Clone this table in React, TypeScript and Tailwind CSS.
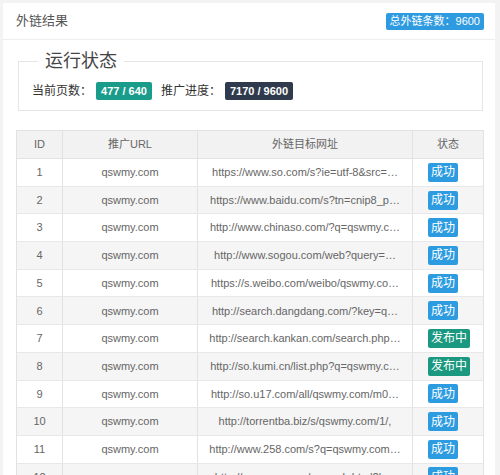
const rows: { url: string; status: 'ok' | 'pending' }[] = [
  { url: 'https://www.so.com/s?ie=utf-8&src=…', status: 'ok' },
  { url: 'https://www.baidu.com/s?tn=cnip8_p…', status: 'ok' },
  { url: 'http://www.chinaso.com/?q=qswmy.c…', status: 'ok' },
  { url: 'http://www.sogou.com/web?query=…', status: 'ok' },
  { url: 'https://s.weibo.com/weibo/qswmy.co…', status: 'ok' },
  { url: 'http://search.dangdang.com/?key=q…', status: 'ok' },
  { url: 'http://search.kankan.com/search.php…', status: 'pending' },
  { url: 'http://so.kumi.cn/list.php?q=qswmy.c…', status: 'pending' },
  { url: 'http://so.u17.com/all/qswmy.com/m0…', status: 'ok' },
  { url: 'http://torrentba.biz/s/qswmy.com/1/,', status: 'ok' },
  { url: 'http://www.258.com/s?q=qswmy.com…', status: 'ok' },
  { url: 'http://www.sooe.cn/vsearch.html?k…', status: 'ok' },
];

const font = { fontFamily: '"Liberation Sans", Arial, "Noto Sans CJK SC", sans-serif' };

function Badge({ children, color }: { children: React.ReactNode; color: string }) {
  return (
    <span className={`inline-flex items-center h-[19px] px-[3px] rounded-[2px] text-white text-[12px] ${color}`}>
      {children}
    </span>
  );
}

export default function App() {
  return (
    <div className="w-[500px] h-[475px] overflow-hidden bg-[#f3f3f4] pt-[3px] pl-[3px]" style={font}>
      <div className="w-[492px] h-[472px] bg-white">
        {/* header */}
        <div className="h-[37px] flex items-center justify-between pl-[13px] pr-[11px] border-b border-[#eeeeee]">
          <span className="text-[13px] text-[#555]">外链结果</span>
          <span className="inline-flex items-center h-[17px] px-[4px] rounded-[2px] bg-[#2e9ae0] text-white text-[11px]">
            总外链条数：9600
          </span>
        </div>

        <div className="pl-[13px] pr-[11px] pt-[10px]">
          {/* run status */}
          <fieldset className="ml-[2px] mr-[1px] border border-[#e5e5e5] pl-[13px] pb-[10px]">
            <legend className="ml-[6px] px-[7px] text-[18px] leading-[22px] text-[#444]">运行状态</legend>
            <div className="mt-[10px] h-[18px] flex items-center text-[12px] text-[#333]">
              <span>当前页数：</span>
              <span className="ml-[4px] inline-flex items-center h-[18px] px-[5px] rounded-[2px] bg-[#1a9c8a] text-white text-[11px] font-bold">
                477 / 640
              </span>
              <span className="ml-[9px]">推广进度：</span>
              <span className="ml-[4px] inline-flex items-center h-[18px] px-[5px] rounded-[2px] bg-[#2f3b4c] text-white text-[11px] font-bold">
                7170 / 9600
              </span>
            </div>
          </fieldset>

          {/* table */}
          <div className="mt-[19px] w-[468px] border border-[#e2e2e2] text-[11px] text-[#666]">
            <div className="grid grid-cols-[46px_135px_215px_1fr] h-[28px] bg-[#f2f2f2] border-b border-[#e2e2e2]">
              <div className="flex items-center justify-center border-r border-[#e2e2e2]">ID</div>
              <div className="flex items-center justify-center border-r border-[#e2e2e2]">推广URL</div>
              <div className="flex items-center justify-center border-r border-[#e2e2e2]">外链目标网址</div>
              <div className="flex items-center justify-center">状态</div>
            </div>
            {rows.map((r, i) => (
              <div
                key={i}
                className={`grid grid-cols-[46px_135px_215px_1fr] h-[27.7px] border-b border-[#e8e8e8] ${
                  i % 2 === 1 ? 'bg-[#f5f5f5]' : 'bg-white'
                }`}
              >
                <div className="flex items-center justify-center border-r border-[#e2e2e2]">{i + 1}</div>
                <div className="flex items-center justify-center border-r border-[#e2e2e2]">qswmy.com</div>
                <div className="flex items-center justify-center border-r border-[#e2e2e2] whitespace-nowrap overflow-hidden">
                  {r.url}
                </div>
                <div className="flex items-center pl-[15px]">
                  {r.status === 'ok' ? (
                    <Badge color="bg-[#2d9be0]">成功</Badge>
                  ) : (
                    <Badge color="bg-[#1b9880]">发布中</Badge>
                  )}
                </div>
              </div>
            ))}
          </div>
        </div>
      </div>
    </div>
  );
}
